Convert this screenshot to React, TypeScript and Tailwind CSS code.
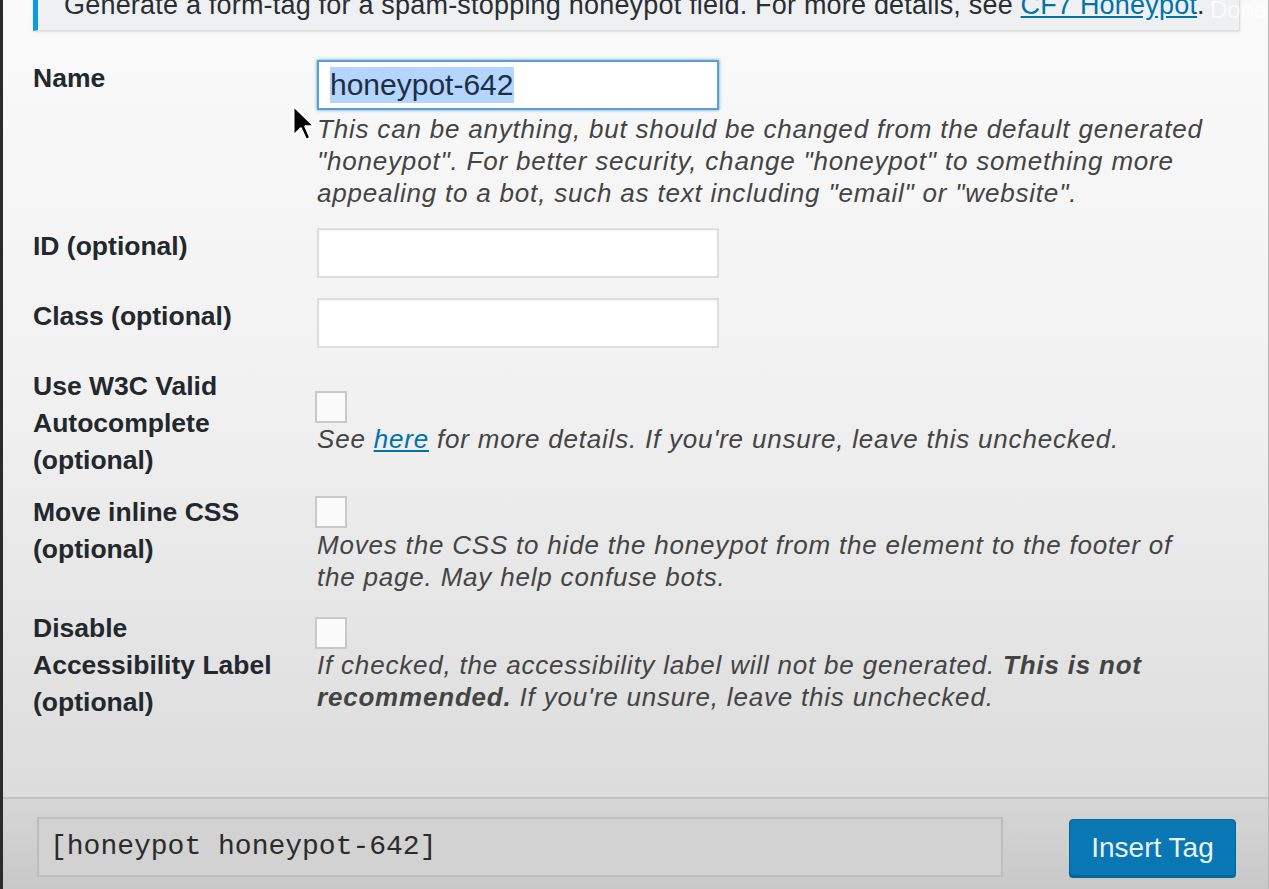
import { type ReactNode } from 'react';

const sans = "font-['Helvetica_Neue','Liberation_Sans',Arial,sans-serif]";

function Label({ children }: { children: ReactNode }) {
  return (
    <div className="w-[284px] shrink-0 text-[26.5px] font-bold leading-[37px] text-[#23282d]">
      {children}
    </div>
  );
}

function Desc({ children }: { children: ReactNode }) {
  return <p className="text-[26px] italic leading-[32px] tracking-[0.8px] text-[#444]">{children}</p>;
}

function TextBox() {
  return <div className="h-[50px] w-[402px] border-2 border-[#dedede] bg-white shadow-[inset_0_1px_2px_rgba(0,0,0,0.05)]" />;
}

function Checkbox({ className = '' }: { className?: string }) {
  return <div className={`h-[32px] w-[32px] border-2 border-[#c9c9c9] bg-[#fafafa] ${className}`} />;
}

export default function App() {
  return (
    <div
      className={`relative flex h-[889px] w-[1269px] flex-col overflow-hidden border-l-[3px] border-r border-l-[#2b2b2b] border-r-[#b8b8b8] ${sans}`}
    >
      {/* main panel */}
      <div className="flex-1 bg-gradient-to-b from-[#fafafa] via-[#f1f1f1] to-[#dcdcdc] pl-[30px] pr-[28px]">
        {/* notice */}
        <div className="mt-[-16px] flex h-[47px] items-end border border-l-[5px] border-[#dcdcdc] border-l-[#0a9be0] bg-[#eef0f2] pl-[26px] shadow-[0_1px_2px_rgba(0,0,0,0.12)]">
          <p className="mb-[8px] whitespace-nowrap text-[27px] leading-[34px] tracking-[0.2px] text-[#2a2e33]">
            Generate a form-tag for a spam-stopping honeypot field. For more details, see{' '}
            <span className="text-[#0073aa] underline">CF7 Honeypot</span>.
          </p>
        </div>

        {/* Name */}
        <div className="mt-[29px] flex">
          <Label>Name</Label>
          <div>
            <div className="flex h-[50px] w-[402px] items-center border-2 border-[#5b9dd9] bg-white pl-[11px] shadow-[0_0_3px_rgba(30,140,190,0.8)]">
              <span className="bg-[#b4d5fe] text-[30px] leading-[36px] text-[#1e2f44]">honeypot-642</span>
            </div>
            <div className="mt-[3px]">
              <Desc>
                This can be anything, but should be changed from the default generated
                <br />
                "honeypot". For better security, change "honeypot" to something more
                <br />
                appealing to a bot, such as text including "email" or "website".
              </Desc>
            </div>
          </div>
        </div>

        {/* ID */}
        <div className="mt-[19px] flex">
          <Label>ID (optional)</Label>
          <TextBox />
        </div>

        {/* Class */}
        <div className="mt-[20px] flex">
          <Label>Class (optional)</Label>
          <TextBox />
        </div>

        {/* W3C */}
        <div className="mt-[20px] flex">
          <Label>
            Use W3C Valid
            <br />
            Autocomplete
            <br />
            (optional)
          </Label>
          <div>
            <Checkbox className="mt-[23px] -ml-[2px]" />
            <Desc>
              See <span className="text-[#0073aa] underline">here</span> for more details. If you're unsure, leave this unchecked.
            </Desc>
          </div>
        </div>

        {/* Move inline CSS */}
        <div className="mt-[15px] flex">
          <Label>
            Move inline CSS
            <br />
            (optional)
          </Label>
          <div>
            <Checkbox className="mt-[2px] -ml-[2px] mb-[1px]" />
            <Desc>
              Moves the CSS to hide the honeypot from the element to the footer of
              <br />
              the page. May help confuse bots.
            </Desc>
          </div>
        </div>

        {/* Disable accessibility label */}
        <div className="mt-[17px] flex">
          <Label>
            Disable
            <br />
            Accessibility Label
            <br />
            (optional)
          </Label>
          <div>
            <Checkbox className="mt-[7px] -ml-[2px]" />
            <Desc>
              If checked, the accessibility label will not be generated. <b>This is not</b>
              <br />
              <b>recommended.</b> If you're unsure, leave this unchecked.
            </Desc>
          </div>
        </div>
      </div>

      {/* footer */}
      <div className="flex h-[92px] shrink-0 items-start border-t-2 border-[#c2c2c2] bg-gradient-to-b from-[#d6d6d6] to-[#c8c8c8] pl-[34px] pr-[32px] pt-[18px]">
        <div className="flex h-[60px] w-[966px] items-center border-2 border-[#bdbdbd] bg-[#d2d2d2] pl-[11px] font-['Liberation_Mono',Menlo,monospace] text-[28px] text-[#2b2b2b]">
          [honeypot honeypot-642]
        </div>
        <button className="ml-auto mt-[2px] h-[57px] w-[167px] rounded-[4px] border border-[#006799] bg-[#0a77b5] text-[28px] text-[#e8f2f8] shadow-[0_2px_0_#006799]">
          Insert Tag
        </button>
      </div>

      {/* mouse pointer */}
      <svg className="absolute left-[288px] top-[104px]" width="26" height="38" viewBox="0 0 12 18">
        <path d="M1 1 L1 15 L4.5 11.5 L7 17 L9 16 L6.6 10.6 L11 10.6 Z" fill="#000" stroke="#fff" strokeWidth="1" strokeLinejoin="round" />
      </svg>

      {/* video overlay text */}
      <span className="absolute left-[1207px] top-[-8px] text-[24px] text-white/75">Done</span>
    </div>
  );
}
